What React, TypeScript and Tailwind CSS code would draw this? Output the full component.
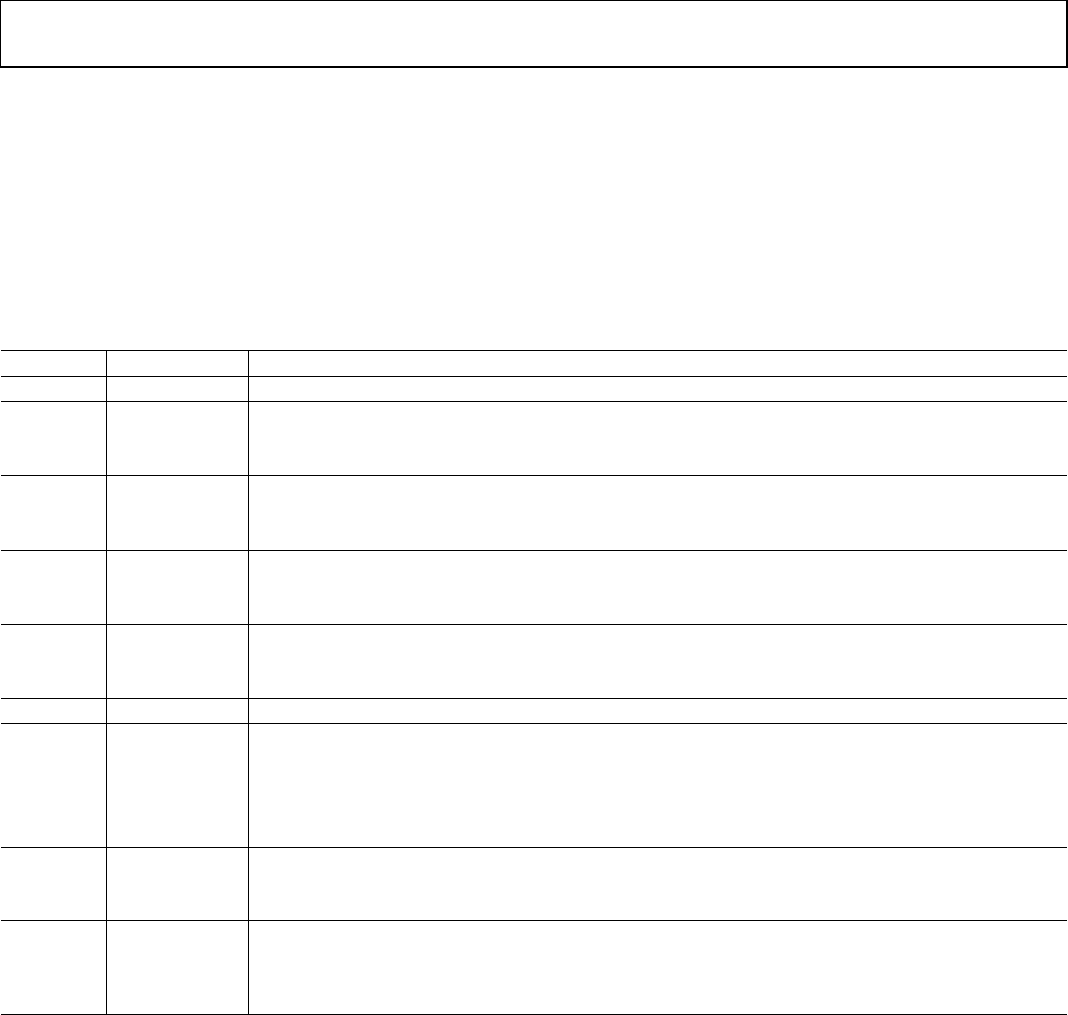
import React from "react";

const rows = [26, 25, 74, 75, 74, 74, 25, 124, 73, 94];

export default function App() {
  return (
    <div className="w-[1068px] bg-white font-['Liberation_Sans',sans-serif] text-black">
      <div className="h-[68px] w-[1068px] border-t border-l border-r-2 border-b-2 border-black" />
      <div className="mt-[282px] mx-px border-b border-black">
        {rows.map((h, i) => (
          <div key={i} className="flex border-t border-black" style={{ height: h }}>
            <div className="w-[105px] shrink-0" />
            <div className="w-[143px] shrink-0 border-l border-r border-black" />
            <div className="flex-1" />
          </div>
        ))}
      </div>
    </div>
  );
}
